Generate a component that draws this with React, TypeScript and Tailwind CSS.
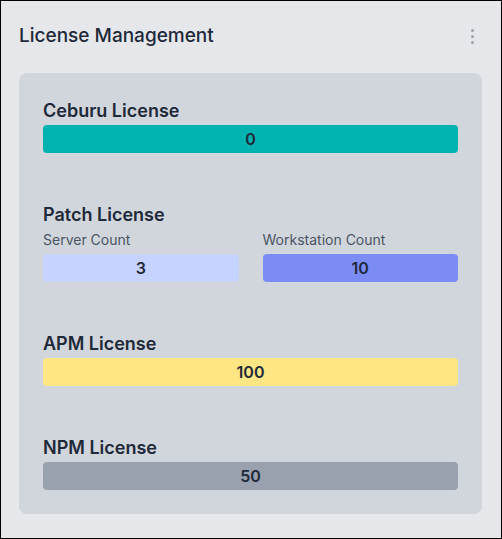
import React from "react";

type Bar = { value: number; color: string };

function ValueBar({ value, color }: Bar) {
  return (
    <div className={`flex h-7 items-center justify-center rounded ${color}`}>
      <span className="text-base font-semibold text-gray-800">{value}</span>
    </div>
  );
}

function Heading({ children }: { children: React.ReactNode }) {
  return <h3 className="text-lg leading-7 font-semibold text-gray-800">{children}</h3>;
}

export default function App() {
  return (
    <div
      className="h-[539px] w-[502px] border border-black bg-gray-200 pr-[19px] pl-[18px]"
      style={{ fontFamily: "Inter, 'Noto Sans', sans-serif" }}
    >
      <div className="flex h-[72px] items-center justify-between pb-[2px]">
        <h2 className="text-[19px] font-medium text-gray-800">License Management</h2>
        <div className="mr-[8px] flex flex-col gap-[3px]">
          <span className="block h-[3px] w-[3px] rounded-full bg-gray-400" />
          <span className="block h-[3px] w-[3px] rounded-full bg-gray-400" />
          <span className="block h-[3px] w-[3px] rounded-full bg-gray-400" />
        </div>
      </div>

      <div className="flex flex-col gap-12 rounded-lg bg-gray-300 p-6">
        <section>
          <Heading>Ceburu License</Heading>
          <ValueBar value={0} color="bg-[#00b2b0]" />
        </section>

        <section>
          <Heading>Patch License</Heading>
          <div className="grid grid-cols-2 gap-6">
            <div>
              <div className="mt-[1px] mb-[4px] text-sm leading-5 text-gray-600">Server Count</div>
              <ValueBar value={3} color="bg-indigo-200" />
            </div>
            <div>
              <div className="mt-[1px] mb-[4px] text-sm leading-5 text-gray-600">Workstation Count</div>
              <ValueBar value={10} color="bg-[#7b8cf5]" />
            </div>
          </div>
        </section>

        <section>
          <Heading>APM License</Heading>
          <ValueBar value={100} color="bg-amber-200" />
        </section>

        <section>
          <Heading>NPM License</Heading>
          <ValueBar value={50} color="bg-gray-400" />
        </section>
      </div>
    </div>
  );
}
